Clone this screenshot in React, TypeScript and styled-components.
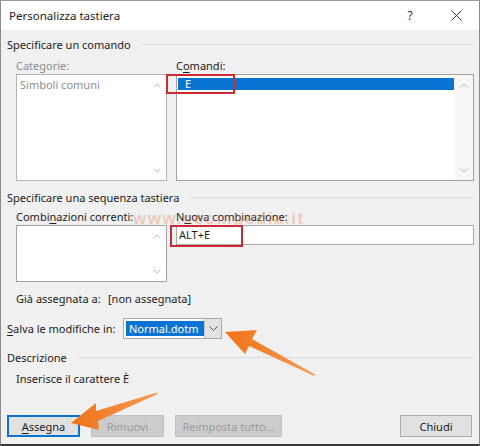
import React from "react";
import styled, { createGlobalStyle } from "styled-components";

const Global = createGlobalStyle`
  html, body { margin: 0; padding: 0; background: #f0f0f0; }
  body { font-family: "Noto Sans", "Liberation Sans", sans-serif; }
  * { box-sizing: border-box; }
`;

const Window = styled.div`
  position: relative;
  width: 480px;
  height: 446px;
  background: #f0f0f0;
  border-left: 1px solid #8c8c8c;
  border-right: 1px solid #8c8c8c;
  border-top: 1px solid #9c9c9c;
  border-bottom: 2px solid #3a3a3a;
  display: flex;
  flex-direction: column;
  font-size: 11px;
  color: #1c1c1c;
  overflow: hidden;
`;

const TitleBar = styled.div`
  height: 29px;
  background: #ffffff;
  display: flex;
  align-items: center;
  padding-left: 8px;
`;

const Title = styled.div`
  flex: 1;
  font-size: 11.5px;
  color: #222;
`;

const Ctrl = styled.div`
  width: 46px;
  height: 29px;
  display: flex;
  align-items: center;
  justify-content: center;
  font-size: 12px;
  color: #333;
`;

const Body = styled.div`
  flex: 1;
  display: flex;
  flex-direction: column;
  padding: 0 5px 0 6px;
`;

const SectionHeader = styled.div<{ $mt: number }>`
  display: flex;
  align-items: center;
  gap: 10px;
  height: 16px;
  margin-top: ${(p) => p.$mt}px;
  white-space: nowrap;
  &::after {
    content: "";
    flex: 1;
    height: 1px;
    background: #dcdcdc;
  }
`;

const TwoCols = styled.div<{ $mt: number }>`
  display: grid;
  grid-template-columns: 151px 298px;
  column-gap: 9px;
  padding-left: 9px;
  margin-top: ${(p) => p.$mt}px;
`;

const Label = styled.div<{ $disabled?: boolean }>`
  height: 15px;
  line-height: 15px;
  margin-bottom: 1px;
  white-space: nowrap;
  color: ${(p) => (p.$disabled ? "#8e8e8e" : "#1c1c1c")};
`;

const Acc = styled.span`
  text-decoration: underline;
  text-underline-offset: 2px;
`;

const ListBox = styled.div<{ $h: number; $disabled?: boolean }>`
  position: relative;
  height: ${(p) => p.$h}px;
  border: 1px solid ${(p) => (p.$disabled ? "#b4b4b4" : "#a2a2a2")};
  background: #ffffff;
  display: flex;
`;

const Items = styled.div`
  flex: 1;
  padding: 2px 1px 0 1px;
`;

const Item = styled.div<{ $selected?: boolean; $disabled?: boolean }>`
  height: 12px;
  line-height: 12px;
  padding-left: ${(p) => (p.$selected ? 7 : 2)}px;
  background: ${(p) => (p.$selected ? "#0a74d4" : "transparent")};
  color: ${(p) => (p.$selected ? "#ffffff" : p.$disabled ? "#8e8e8e" : "#1c1c1c")};
  white-space: nowrap;
  margin-top: ${(p) => (p.$selected ? 1 : 2)}px;
`;

const ScrollBar = styled.div<{ $shaded?: boolean }>`
  width: 18px;
  display: flex;
  flex-direction: column;
  justify-content: space-between;
  background: ${(p) => (p.$shaded ? "#f6f6f6" : "#ffffff")};
  padding: 1px 0;
`;

const ArrowBox = styled.div`
  height: 18px;
  display: flex;
  align-items: center;
  justify-content: center;
`;

const Highlight = styled.div<{ $l: number; $t: number; $w: number; $h: number }>`
  position: absolute;
  left: ${(p) => p.$l}px;
  top: ${(p) => p.$t}px;
  width: ${(p) => p.$w}px;
  height: ${(p) => p.$h}px;
  border: 2px solid #cc2a36;
  pointer-events: none;
`;

const TextInput = styled.div`
  position: relative;
  height: 20px;
  border: 1px solid #aaaaaa;
  background: #ffffff;
  padding-left: 2px;
  line-height: 18px;
  white-space: nowrap;
`;

const InfoRow = styled.div<{ $mt: number; $indent: number }>`
  display: flex;
  align-items: center;
  margin-top: ${(p) => p.$mt}px;
  padding-left: ${(p) => p.$indent}px;
  white-space: nowrap;
`;

const InfoLabel = styled.div<{ $w: number }>`
  width: ${(p) => p.$w}px;
  height: 15px;
  line-height: 15px;
`;

const Combo = styled.div`
  width: 99px;
  height: 21px;
  border: 1px solid #a9a9a9;
  background: #ffffff;
  display: flex;
  align-items: center;
  padding-left: 2px;
`;

const ComboText = styled.div`
  width: 78px;
  height: 15px;
  line-height: 15px;
  background: #0a74d4;
  color: #ffffff;
  padding-left: 3px;
`;

const ComboButton = styled.div`
  margin-left: auto;
  width: 17px;
  height: 19px;
  background: #e3e3e3;
  border-left: 1px solid #c4c4c4;
  display: flex;
  align-items: center;
  justify-content: center;
`;

const ButtonRow = styled.div`
  margin-top: auto;
  margin-bottom: 7px;
  display: flex;
  gap: 11px;
  padding-right: 2px;
`;

const Button = styled.div<{ $w: number; $variant?: "default" | "disabled" | "normal" }>`
  width: ${(p) => p.$w}px;
  height: 22px;
  display: flex;
  align-items: center;
  justify-content: center;
  font-size: 11px;
  background: ${(p) => (p.$variant === "disabled" ? "#cccccc" : "#e1e1e1")};
  color: ${(p) => (p.$variant === "disabled" ? "#9a9a9a" : "#1c1c1c")};
  border: 1px solid
    ${(p) =>
      p.$variant === "default" ? "#0a74d4" : p.$variant === "disabled" ? "#c2c2c2" : "#adadad"};
  box-shadow: ${(p) => (p.$variant === "default" ? "inset 0 0 0 1px #0a74d4" : "none")};
  &:last-child {
    margin-left: auto;
  }
`;

const Overlay = styled.svg`
  position: absolute;
  left: -1px;
  top: -1px;
  pointer-events: none;
`;

const Watermark = styled.div`
  position: absolute;
  left: 132px;
  top: 208px;
  font-family: "Liberation Sans", sans-serif;
  font-weight: bold;
  font-size: 17px;
  letter-spacing: 1.5px;
  color: rgba(232, 110, 60, 0.3);
  pointer-events: none;
  white-space: nowrap;
`;

const Chevron = ({ up }: { up?: boolean }) => (
  <svg width="8" height="5" viewBox="0 0 8 5">
    <path
      d={up ? "M0.5 4.5 L4 1 L7.5 4.5" : "M0.5 0.5 L4 4 L7.5 0.5"}
      fill="none"
      stroke="#bdbdbd"
      strokeWidth="1"
    />
  </svg>
);

const Scroll = ({ shaded }: { shaded?: boolean }) => (
  <ScrollBar $shaded={shaded}>
    <ArrowBox>
      <Chevron up />
    </ArrowBox>
    <ArrowBox>
      <Chevron />
    </ArrowBox>
  </ScrollBar>
);

export default function App() {
  return (
    <>
      <Global />
      <Window>
        <TitleBar>
          <Title>Personalizza tastiera</Title>
          <Ctrl>?</Ctrl>
          <Ctrl>
            <svg width="11" height="11" viewBox="0 0 11 11">
              <path d="M0.5 0.5 L10.5 10.5 M10.5 0.5 L0.5 10.5" stroke="#333" strokeWidth="1" />
            </svg>
          </Ctrl>
        </TitleBar>
        <Body>
          <SectionHeader $mt={6}>Specificare un comando</SectionHeader>
          <TwoCols $mt={6}>
            <div>
              <Label $disabled>Categorie:</Label>
              <ListBox $h={107} $disabled>
                <Items>
                  <Item $disabled>Simboli comuni</Item>
                </Items>
                <Scroll />
              </ListBox>
            </div>
            <div>
              <Label>
                C<Acc>o</Acc>mandi:
              </Label>
              <ListBox $h={107}>
                <Items>
                  <Item $selected>E</Item>
                </Items>
                <Scroll shaded />
                <Highlight $l={-11} $t={-1} $w={69} $h={20} />
              </ListBox>
            </div>
          </TwoCols>
          <SectionHeader $mt={8}>Specificare una sequenza tastiera</SectionHeader>
          <TwoCols $mt={4}>
            <div>
              <Label>
                Combi<Acc>n</Acc>azioni correnti:
              </Label>
              <ListBox $h={57}>
                <Items />
                <Scroll />
              </ListBox>
            </div>
            <div>
              <Label>
                N<Acc>u</Acc>ova combinazione:
              </Label>
              <TextInput>
                ALT+E
                <Highlight $l={-7} $t={-1} $w={73} $h={22} />
              </TextInput>
            </div>
          </TwoCols>
          <InfoRow $mt={9} $indent={9}>
            <InfoLabel $w={92}>Già assegnata a:</InfoLabel>
            <span>[non assegnata]</span>
          </InfoRow>
          <InfoRow $mt={12} $indent={0}>
            <InfoLabel $w={116}>
              <Acc>S</Acc>alva le modifiche in:
            </InfoLabel>
            <Combo>
              <ComboText>Normal.dotm</ComboText>
              <ComboButton>
                <svg width="9" height="5" viewBox="0 0 9 5">
                  <path d="M0.5 0.5 L4.5 4.5 L8.5 0.5" fill="none" stroke="#555" strokeWidth="1" />
                </svg>
              </ComboButton>
            </Combo>
          </InfoRow>
          <SectionHeader $mt={10}>Descrizione</SectionHeader>
          <InfoRow $mt={6} $indent={9}>
            <InfoLabel $w={200}>Inserisce il carattere È</InfoLabel>
          </InfoRow>
          <ButtonRow>
            <Button $w={73} $variant="default">
              <Acc>A</Acc>ssegna
            </Button>
            <Button $w={73} $variant="disabled">
              Rimuovi
            </Button>
            <Button $w={107} $variant="disabled">
              Reimposta tutto...
            </Button>
            <Button $w={72} $variant="normal">
              Chiudi
            </Button>
          </ButtonRow>
        </Body>
        <Watermark>www.ecompedia.it</Watermark>
        <Overlay width="480" height="446" viewBox="0 0 480 446">
          <defs>
            <linearGradient id="og" x1="0" y1="0" x2="1" y2="0">
              <stop offset="0" stopColor="#f0731a" />
              <stop offset="1" stopColor="#f59a50" />
            </linearGradient>
          </defs>
          <polygon
            points="225,332 257,330 252,339 315,374.5 314.5,376 249,346 245,354"
            fill="url(#og)"
          />
          <polygon
            points="71,423 96,403 96,411 157,392.5 157.5,394 98,421 99,430"
            fill="url(#og)"
          />
        </Overlay>
      </Window>
    </>
  );
}
